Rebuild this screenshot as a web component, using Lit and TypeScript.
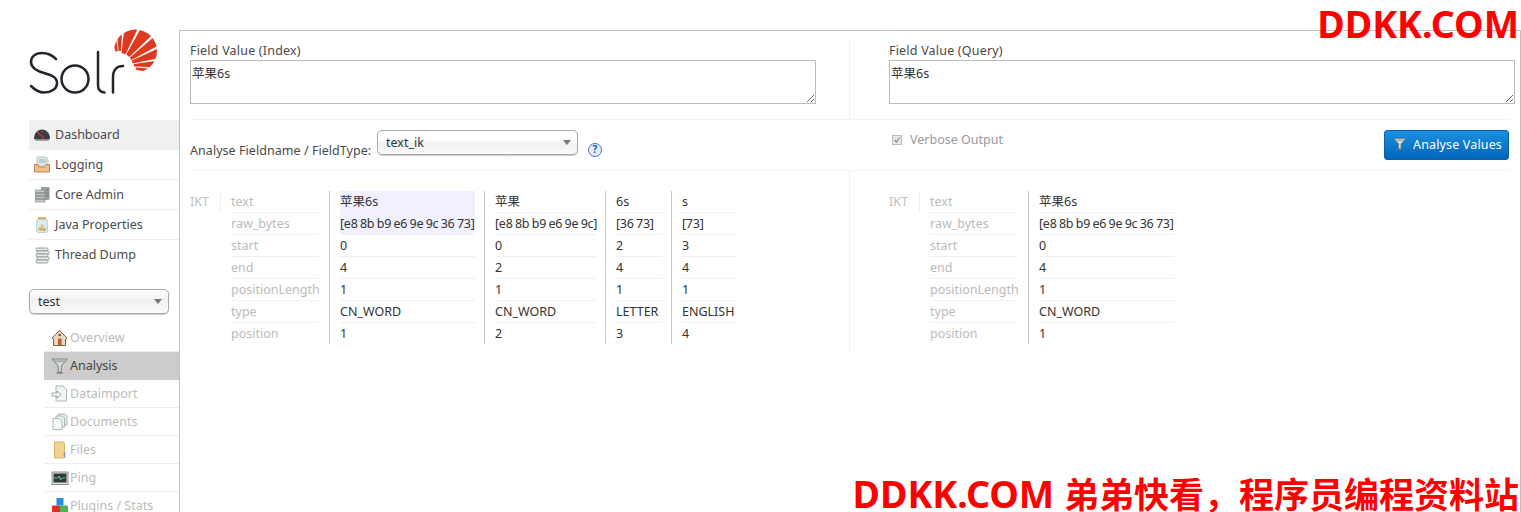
import { LitElement, html, css, svg } from "lit";
import { customElement } from "lit/decorators.js";

const CX = 120, CY = 66;
const rays: [number, number, number][] = [
  [-107, -98, 15], [-95.5, -86.5, 15], [-83.5, -64.5, 13], [-61, -44, 13],
  [-40.500, -28, 13], [-24.500, -11.500, 13], [-8, 2, 14], [5, 13, 16],
];
const sun = () =>
  rays.map(([a, b, r0]) => {
    const p = (d: number, r: number) => {
      const t = (d * Math.PI) / 180;
      return `${(CX + r * Math.cos(t)).toFixed(1)} ${(CY + r * Math.sin(t)).toFixed(1)}`;
    };
    return svg`<path d="M${p(a, r0)}L${p(a, 60)}L${p(b, 60)}L${p(b, r0)}Z" fill="#dd3a21" clip-path="url(#sunclip)"/>`;
  });

const funnel = svg`<path d="M1 2h15.500l-6.200 7V15H7.200V9z" fill="#d8dcda" stroke="#70767a" stroke-width=".9" stroke-linejoin="round"/><path d="M2.500 3.200h12.500l-2 2H4.500z" fill="#a8afb0"/><path d="M5.500 16h6.500" stroke="#70767a" stroke-width="1.200"/>`;

const icons: Record<string, unknown> = {
  dash: svg`<path d="M1 13C1 7 4.500 3.500 9 3.500S17 7 17 13z" fill="#3a3d42"/><path d="M1.500 13h15l-1 1.800h-13z" fill="#8a8d90"/><path d="M5 6.500l6 6" stroke="#d3362b" stroke-width="1.200"/><path d="M4 6l1 1M9 5v1M14 6.500l-1 1" stroke="#aaa" stroke-width=".7"/>`,
  log: svg`<path d="M4 1h9l2 2v7H4z" fill="#dcebe8" stroke="#9db3b0" stroke-width=".7"/><path d="M6 4h7M6 6h7" stroke="#9db3b0"/><path d="M1.500 8.500h3.500l1 2.500h6l1-2.500h3.500v7.500h-15z" fill="#f0bd88" stroke="#c08a58"/>`,
  core: svg`<rect x="8" y="1" width="8.500" height="13" fill="#9aa3a0"/><rect x="2.500" y="4" width="9.500" height="12" fill="#c3c8c0" stroke="#7b8280" stroke-width=".6"/><path d="M2.500 7h9.500M2.500 10h9.500M2.500 13h9.500M13 4h3M13 7h3M13 10h3" stroke="#6d7472"/>`,
  java: svg`<rect x="5" y="1" width="8" height="2.500" fill="#d8b25c"/><rect x="3.500" y="3.500" width="11" height="13" rx="1.500" fill="#d9ebf0" stroke="#a9c3cc" stroke-width=".7"/><circle cx="7.300" cy="13" r="2" fill="#e2b868"/><circle cx="11" cy="13.500" r="1.800" fill="#d9a650"/><circle cx="9.300" cy="10" r="1.700" fill="#e6c27a"/>`,
  thread: svg`<g fill="#e9ebe9" stroke="#84898a" stroke-width=".8"><rect x="3" y="2" width="12" height="3" rx="1.200"/><rect x="4" y="5" width="12" height="3" rx="1.200"/><rect x="3" y="8" width="12" height="3" rx="1.200"/><rect x="4" y="11" width="12" height="3" rx="1.200"/><rect x="3" y="14" width="12" height="3" rx="1.200"/></g>`,
  home: svg`<path d="M1 9l7.500-7.500L16 9l-1.500 1V16.500h-12V10z" fill="#e8d9c2" stroke="#8d5a3c" stroke-width="1"/><rect x="7" y="9.500" width="3.500" height="7" fill="#b5652b"/><circle cx="8.700" cy="6" r="1.300" fill="#7d5638"/>`,
  filter: funnel,
  data: svg`<path d="M5 1h7l3.500 3.500V16H5z" fill="#f1f6f5" stroke="#9bb1ae" stroke-width=".9"/><path d="M1 8h5V6l4 3.500-4 3.500v-2H1z" fill="#fff" stroke="#7f9693" stroke-width=".8"/>`,
  docs: svg`<path d="M7.500 1h6l2.500 2v9H7.500z" fill="#e8f0ee" stroke="#93a9a6" stroke-width=".8"/><path d="M5 3h6l2.500 2v9H5z" fill="#eff4f3" stroke="#93a9a6" stroke-width=".8"/><path d="M2 5.500h6.500l2.500 2v9H2z" fill="#f6f9f8" stroke="#93a9a6" stroke-width=".8"/>`,
  files: svg`<path d="M3.500 1h9l1 1.500V17h-10z" fill="#f3d48c" stroke="#caa45a" stroke-width=".8"/><path d="M13.500 11v5" stroke="#5fa6d8" stroke-width="1.600"/>`,
  ping: svg`<rect x="1" y="3" width="16" height="12.500" fill="#dcdedd" stroke="#777" stroke-width=".8"/><rect x="2.500" y="4.500" width="13" height="9" fill="#2e3a3a"/><path d="M3 9h4l1-2 1.500 4 1-2h4" stroke="#6ddba8" fill="none" stroke-width=".8"/>`,
  plug: svg`<rect x="5.500" y="1" width="7" height="7.500" rx=".5" fill="#2b8fd8"/><rect x="1" y="8.500" width="8" height="8.500" rx=".5" fill="#d9302a"/><rect x="9" y="8.500" width="8" height="8.500" rx=".5" fill="#4db350"/>`,
};

const ic = (k: string) => html`<svg class="ic" width="18" height="18" viewBox="0 0 18 18">${icons[k]}</svg>`;

const LABELS = ["text", "raw_bytes", "start", "end", "positionLength", "type", "position"];
const L = [
  ["苹果6s", "[e8 8b b9 e6 9e 9c 36 73]", "0", "4", "1", "CN_WORD", "1"],
  ["苹果", "[e8 8b b9 e6 9e 9c]", "0", "2", "1", "CN_WORD", "2"],
  ["6s", "[36 73]", "2", "4", "1", "LETTER", "3"],
  ["s", "[73]", "3", "4", "1", "ENGLISH", "4"],
];

@customElement("app-root")
export class AppRoot extends LitElement {
  static styles = css`
    :host { display: block; height: 512px; width: 1521px; overflow: hidden; position: relative; background: #fff;
      font-family: 'Noto Sans','Noto Sans CJK SC',sans-serif; font-size: 12.5px; color: #333; }
    * { box-sizing: border-box; }
    .page { display: flex; height: 512px; padding: 30px 0 0 29px; }
    .side { width: 150px; flex: none; margin-top: -30px; }
    .logo { display: block; width: 150px; height: 120px; }
    .nav-item { height: 30px; display: flex; align-items: center; gap: 4px; padding-left: 4px; border-bottom: 1px solid #ededed; color: #4a4a4a; }
    .nav-item.on { background: #f0f0f0; border-bottom-color: #f0f0f0; }
    .nav-item:last-child { border-bottom-color: transparent; }
    .ic { flex: none; display: block; }
    .core-select { margin-top: 19px; height: 25px; width: 140px; border: 1px solid #aaa; border-radius: 5px; display: flex; align-items: center; justify-content: space-between; padding: 0 6px 0 8px;
      background: linear-gradient(#fff, #f0f0f0 45%, #fafafa); box-shadow: 0 1px 1px #ccc; color: #333; }
    .caret { width: 0; height: 0; border: 4px solid transparent; border-top: 5px solid #777; border-bottom: 0; }
    .sub { margin: 10px 0 0 15px; }
    .sub-item { height: 28px; display: flex; align-items: center; gap: 1px; padding-left: 7px; border-bottom: 1px solid #ededed; color: #bbb; }
    .sub-item.on { background: #ccc; color: #444; border-bottom-color: #ccc; }
    .main { flex: 1; min-width: 0; border-top: 1px solid #c0c0c0; border-left: 1px solid #c0c0c0; border-right: 1px solid #c0c0c0; padding: 10px 10px 0; }
    .top { display: grid; grid-template-columns: 659px 1fr; height: 78px; }
    .top-col { padding-right: 33px; }
    .top-col + .top-col { border-left: 1px solid #f0f0f0; padding: 0 0 0 39px; margin-right: -5px; }
    .flabel { display: block; line-height: 20px; height: 18px; color: #4a4a4a; letter-spacing: .2px; }
    textarea { display: block; width: 100%; height: 44px; margin: 1px 0 0; border: 1px solid #bbb; padding: 2px 1px; font: inherit; color: #333; background: #fff; outline: 0; }
    .opts { display: flex; height: 52px; border-top: 1px solid #f4f4f4; border-bottom: 1px solid #f4f4f4; align-items: flex-start; }
    .opt-left { width: 659px; flex: none; display: flex; align-items: flex-start; padding-top: 10px; }
    .opt-left .lab { width: 187px; margin-top: 12px; color: #4a4a4a; white-space: nowrap; line-height: 17px; letter-spacing: .05px; }
    .ft-select { width: 201px; height: 25px; border: 1px solid #aaa; border-radius: 5px; display: flex; align-items: center; justify-content: space-between; padding: 0 6px 0 8px;
      background: linear-gradient(#fff, #fff 40%, #f0f0f0 55%, #fafafa); box-shadow: 0 1px 1px #ccc; }
    .help { width: 14px; height: 14px; border-radius: 50%; border: 1.500px solid #3e6fc4; background: #e6eefb; color: #2a55a8; font-weight: 700; font-size: 10px; line-height: 11px; text-align: center; margin: 13px 0 0 10px; }
    .opt-right { flex: 1; display: flex; justify-content: space-between; align-items: flex-start; padding-left: 43px; }
    .verbose { display: flex; align-items: center; gap: 8px; color: #999; margin-top: 11px; line-height: 18px; }
    .cb { display: block; flex: none; }
    .btn { width: 125px; height: 30px; margin: 10px 1px 0 0; display: flex; align-items: center; gap: 6px; padding: 0 0 2px 8px; color: #fff; border: 1px solid #0a5fa8; border-radius: 3px; background: linear-gradient(#1a8fe0, #0066b8); white-space: nowrap; letter-spacing: .15px; }
    .results { display: grid; grid-template-columns: 659px 1fr; }
    .col { display: flex; height: 182px; padding-top: 20px; align-items: flex-start; }
    .col + .col { border-left: 1px solid #f0f0f0; padding-left: 39px; margin-right: -5px; }
    .ikt { width: 31px; flex: none; color: #c0c0c0; height: 21px; line-height: 22px; border-right: 1px solid #f0f0f0; }
    .tk { display: flex; flex-direction: column; flex: none; height: 153px; }
    .tk.val { border-left: 1px solid #c8c8c8; padding: 0 9px 0 10px; }
    .tk.last { padding-right: 0; }
    .tk.names { width: 108px; padding: 0 10px; color: #bbb; }
    .tk .cell { height: 22px; flex: none; line-height: 22px; border-bottom: 1px solid #f0f0f0; white-space: nowrap; }
    .tk .cell:last-child { border-bottom: 0; }
    .tk .raw { letter-spacing: -.25px; word-spacing: -.6px; }
    .tk .hl { background: #f0f0ff; }
    .mark { position: absolute; color: #f00; font-weight: 700; white-space: nowrap; line-height: 1; right: 2px; font-size: 37.500px; }
    .m1 { top: 5px; }
    .m2 { top: 475px; }
    .m2 b { font-size: 35px; font-weight: 700; }
  `;

  tokens(n: number, widths: number[]) {
    return html`<div class="ikt">IKT</div>
      <div class="tk names">${LABELS.map((l) => html`<div class="cell">${l}</div>`)}</div>
      ${L.slice(0, n).map(
        (t, i) => html`<div class="tk val ${i === 3 ? "last" : ""}" style="width:${widths[i]}px">
          ${t.map((v, j) => html`<div class="cell ${i === 0 && n > 1 && j < 2 ? "hl" : ""} ${j === 1 ? "raw" : ""}">${v}</div>`)}
        </div>`
      )}`;
  }

  render() {
    const nav = [["dash", "Dashboard"], ["log", "Logging"], ["core", "Core Admin"], ["java", "Java Properties"], ["thread", "Thread Dump"]];
    const sub = [["home", "Overview"], ["filter", "Analysis"], ["data", "Dataimport"], ["docs", "Documents"], ["files", "Files"], ["ping", "Ping"], ["plug", "Plugins / Stats"]];
    return html`<div class="page">
        <div class="side">
          <svg class="logo" viewBox="29 0 150 120">
            <defs><clipPath id="sunclip"><circle cx="135.500" cy="51" r="21.500"/></clipPath></defs>
            <g fill="none" stroke="#22252c" stroke-width="2.500" stroke-linecap="round">
              <path d="M56 59C52 55 47 53 42 53 35 53 31 57 31 62 31 68 37 71 44 73 51 75 57 77 57 83 57 89 51 92.500 44 92.500 39 92.500 35 90 31 86"/>
              <circle cx="75" cy="79" r="13.500"/>
              <path d="M98 52V85C98 90 100 92 104.500 92.500"/>
              <path d="M113 92.500V77C113 70 117 66 123 66"/>
            </g>
            ${sun()}
          </svg>
          <div class="nav">
            ${nav.map(([k, l], i) => html`<div class="nav-item ${i === 0 ? "on" : ""}">${ic(k)}<span>${l}</span></div>`)}
          </div>
          <div class="core-select"><span>test</span><i class="caret"></i></div>
          <div class="sub">
            ${sub.map(([k, l], i) => html`<div class="sub-item ${i === 1 ? "on" : ""}">${ic(k)}<span>${l}</span></div>`)}
          </div>
        </div>
        <div class="main">
          <div class="top">
            <div class="top-col"><label class="flabel">Field Value (Index)</label><textarea .value=${"苹果6s"}></textarea></div>
            <div class="top-col"><label class="flabel">Field Value (Query)</label><textarea .value=${"苹果6s"}></textarea></div>
          </div>
          <div class="opts">
            <div class="opt-left">
              <span class="lab">Analyse Fieldname / FieldType:</span>
              <div class="ft-select"><span>text_ik</span><i class="caret"></i></div>
              <div class="help">?</div>
            </div>
            <div class="opt-right">
              <div class="verbose"><svg class="cb" width="10" height="10" viewBox="0 0 10 10"><rect x=".5" y=".5" width="9" height="9" fill="#e8e8e8" stroke="#bbb"/><path d="M2.500 5l2 2 3-4.500" fill="none" stroke="#888" stroke-width="1.200"/></svg>Verbose Output</div>
              <div class="btn"><svg width="14" height="16" viewBox="0 0 18 18">${funnel}</svg>Analyse Values</div>
            </div>
          </div>
          <div class="results">
            <div class="col">${this.tokens(4, [155, 121, 66, 66])}</div>
            <div class="col">${this.tokens(1, [155])}</div>
          </div>
        </div>
      </div>
      <div class="mark m1">DDKK.COM</div>
      <div class="mark m2">DDKK.COM <b>弟弟快看，程序员编程资料站</b></div>`;
  }
}
